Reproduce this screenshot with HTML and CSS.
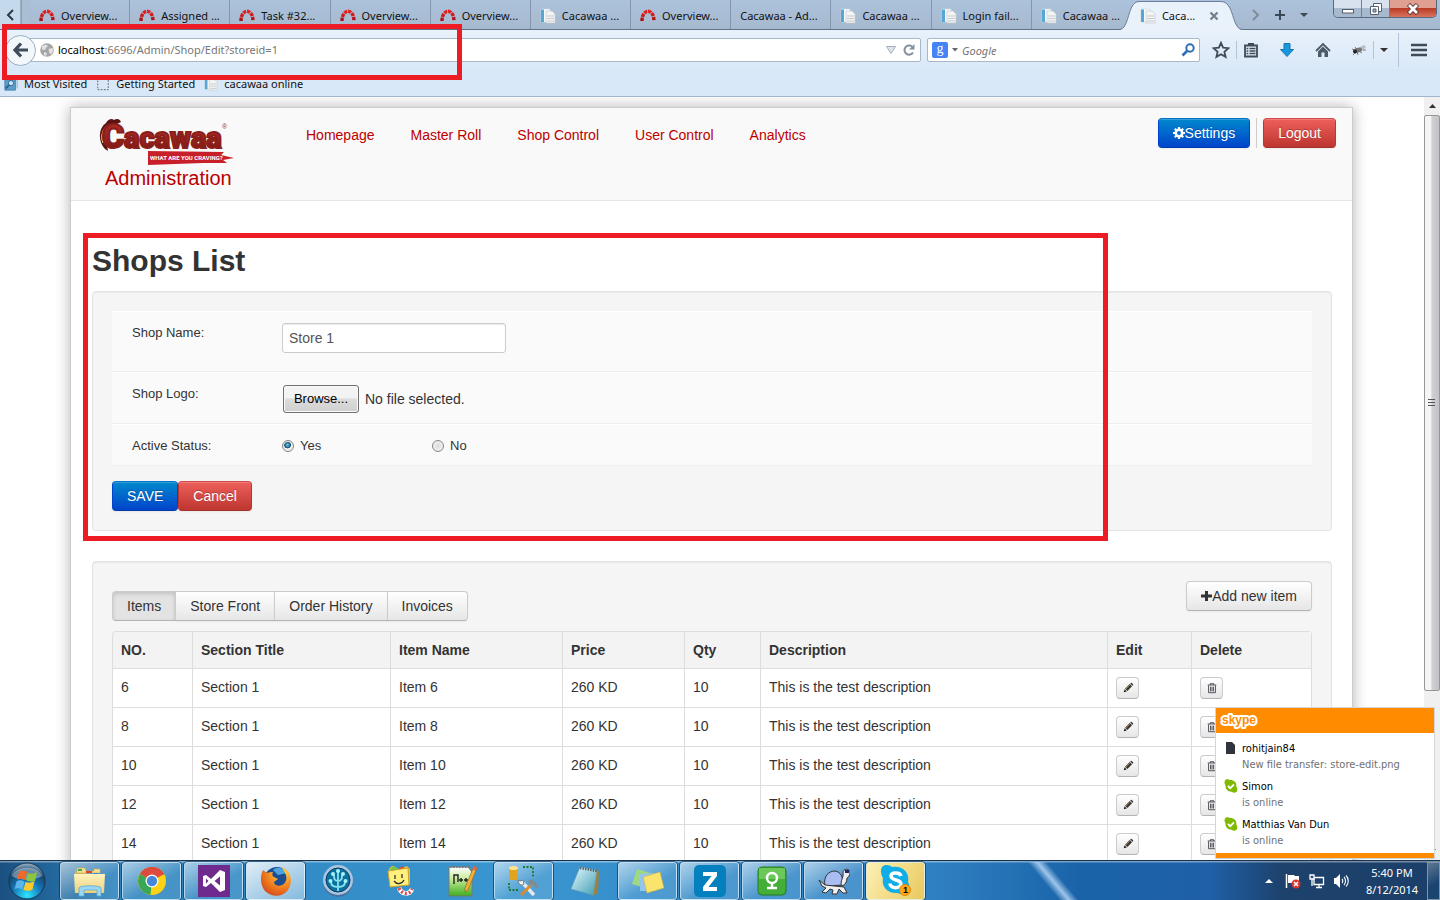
FILE: index.html
```html
<!DOCTYPE html>
<html lang="en">
<head>
<meta charset="utf-8">
<title>Cacawaa - Administration</title>
<link rel="stylesheet" href="styles.css">
</head>
<body>
<svg class="defs" aria-hidden="true">
  <defs>
    <linearGradient id="gWord" x1="0" y1="0" x2="0" y2="1"><stop offset="0" stop-color="#b5302a"/><stop offset=".6" stop-color="#96201c"/><stop offset="1" stop-color="#6b0f0c"/></linearGradient>
    <linearGradient id="gArc" x1="0" y1="0" x2="0" y2="1"><stop offset="0" stop-color="#e8221f"/><stop offset="1" stop-color="#a80d10"/></linearGradient>
    <radialGradient id="gOrb" cx=".5" cy=".9" r=".9"><stop offset="0" stop-color="#2fe6ff"/><stop offset=".45" stop-color="#1576b5"/><stop offset=".75" stop-color="#16456f"/><stop offset="1" stop-color="#9db8c9"/></radialGradient>
    <radialGradient id="gFox" cx=".7" cy=".2" r=".9"><stop offset="0" stop-color="#ffd94a"/><stop offset=".5" stop-color="#f58a1f"/><stop offset="1" stop-color="#d3461a"/></radialGradient>
    <linearGradient id="gGreen" x1="0" y1="0" x2="0" y2="1"><stop offset="0" stop-color="#fff"/><stop offset=".4" stop-color="#c7ec9c"/><stop offset="1" stop-color="#3fae1d"/></linearGradient>
    <linearGradient id="gPad" x1="0" y1="0" x2="1" y2="1"><stop offset="0" stop-color="#e9fbff"/><stop offset="1" stop-color="#3f9db3"/></linearGradient>
    <linearGradient id="gFold" x1="0" y1="0" x2="0" y2="1"><stop offset="0" stop-color="#fff3bf"/><stop offset="1" stop-color="#ecd07a"/></linearGradient>
  </defs>
  <symbol id="arc" viewBox="0 0 16 16"><path d="M2 13C2 0 14 0 14 13" fill="none" stroke="url(#gArc)" stroke-width="3.4" stroke-dasharray="3.4 .8"/></symbol>
  <symbol id="doc" viewBox="0 0 16 16"><path d="M1 1h9v13H1z" fill="#f7fafc" stroke="#cfd6dc" stroke-width=".6"/><path d="M1 1.500h3v12.500H1z" fill="#55a7d6"/><path d="M6 3h6l3 3v9H6z" fill="#f4f4f4" stroke="#c3c8cc" stroke-width=".7"/><path d="M7 8h7M7 10.500h7M7 13h7" stroke="#c4c9cc"/></symbol>
  <symbol id="pencil" viewBox="0 0 14 14"><path d="M2 12l1-3.500 2.600 2.600z" fill="#222"/><path d="M3.600 7.800L9 2.400l2.700 2.700L6.300 10.500z" fill="#333"/><path d="M9.600 1.800l.8-.8c.6-.5 3.200 2 2.700 2.700l-.8.800z" fill="#333"/><path d="M4.600 8.200L9 3.800" stroke="#d9a64a" stroke-width=".8"/></symbol>
  <symbol id="trash" viewBox="0 0 14 14"><path d="M2 3.500h10M5 3.500v-1.500h4v1.500M3 4v8.500h8V4M5.300 5.500v5.500M7 5.500v5.500M8.700 5.500v5.500" fill="none" stroke="#3a3a44" stroke-width="1"/></symbol>
  <symbol id="online" viewBox="0 0 14 14"><path d="M1 1.500C2-.2 5 .2 6 1c4-.3 7 2.700 6.300 6.500C14 10 13.500 12 12 13.200c-1.500.9-3.300.4-4.300-.5C4 13 1 10 1.500 6.300.3 5 .2 3 1 1.500z" fill="#7fba00"/><path d="M4 7l2.200 2.200L10 5.300" fill="none" stroke="#fff" stroke-width="1.800"/></symbol>
</svg>

<header class="chrome">
  <div class="tabstrip">
    <button class="scroll-left" aria-label="Scroll tabs left"><svg width="10" height="12"><path d="M8 1L3 6l5 5" fill="none" stroke="#2c3947" stroke-width="2"/></svg></button>
    <div class="tabs">
      <button class="tab"><svg><use href="#arc"/></svg>Overview...</button>
      <button class="tab"><svg><use href="#arc"/></svg>Assigned ...</button>
      <button class="tab"><svg><use href="#arc"/></svg>Task #32...</button>
      <button class="tab"><svg><use href="#arc"/></svg>Overview...</button>
      <button class="tab"><svg><use href="#arc"/></svg>Overview...</button>
      <button class="tab"><svg><use href="#doc"/></svg>Cacawaa ...</button>
      <button class="tab"><svg><use href="#arc"/></svg>Overview...</button>
      <button class="tab">Cacawaa - Ad...</button>
      <button class="tab"><svg><use href="#doc"/></svg>Cacawaa ...</button>
      <button class="tab"><svg><use href="#doc"/></svg>Login fail...</button>
      <button class="tab last"><svg><use href="#doc"/></svg>Cacawaa ...</button>
      <button class="tab active"><svg class="tab-shape" viewBox="0 0 124 30" preserveAspectRatio="none"><path d="M0 30C11 30 8 2 20 2H102C116 2 112 30 124 30z" fill="#e9f1fa"/><path d="M0 29.500C11 29.500 8 1.500 20 1.500H102C116 1.500 112 29.500 124 29.500" fill="none" stroke="#6d8298"/></svg><svg><use href="#doc"/></svg><span>Caca...</span><svg class="tab-close" viewBox="0 0 10 10"><path d="M1.500 1.500l7 7M8.500 1.500l-7 7" stroke="#76828f" stroke-width="2.400"/></svg></button>
    </div>
    <div class="tab-tools">
      <svg width="8" height="12"><path d="M1 1l5 5-5 5" fill="none" stroke="#7f8c9a" stroke-width="2"/></svg>
      <svg width="12" height="12"><path d="M6 1v10M1 6h10" stroke="#3b4856" stroke-width="2"/></svg>
      <svg width="8" height="6"><path d="M0 1h8L4 5z" fill="#3b4856"/></svg>
    </div>
    <div class="window-buttons">
      <button aria-label="Minimize"><svg width="14" height="12"><rect x="1.500" y="6.500" width="11" height="3.500" fill="#fff" stroke="#56606c"/></svg></button>
      <button aria-label="Restore"><svg width="14" height="14"><path d="M4.500 1.500h8v8h-8z" fill="#fff" stroke="#56606c"/><path d="M1.500 4.500h8v8h-8z" fill="#fff" stroke="#56606c"/><path d="M4 7h3v3H4z" fill="#9fb3c9" stroke="#56606c"/></svg></button>
      <button class="close" aria-label="Close"><svg width="14" height="12"><path d="M2.500 1.500l9 9M11.500 1.500l-9 9" stroke="#5a3232" stroke-width="4.500"/><path d="M3 2l8 8M11 2l-8 8" stroke="#fff" stroke-width="2.800"/></svg></button>
    </div>
  </div>

  <div class="toolbar">
    <button class="back" aria-label="Back"><svg width="16" height="16"><path d="M8 1.500L2 8l6 6.500M2.500 8H15" fill="none" stroke="#3f4c59" stroke-width="3.200"/></svg></button>
    <div class="urlbar">
      <svg width="14" height="14"><circle cx="7" cy="7" r="6.800" fill="#a5a5a5"/><path d="M2 3l4-1.500 2 1.500-2 2-1 2-3-.5zM8.500 6l4-1 .8 2.500-2 4-2-1.500zM4 9l3 1-1 3-2-1z" fill="#e2e2e2"/></svg>
      <span class="url"><b>localhost</b>:6696/Admin/Shop/Edit?storeid=1</span>
      <svg width="10" height="8"><path d="M.5.500h9l-4.500 7z" fill="#dfe5eb" stroke="#a3aeba"/></svg>
      <svg width="14" height="14"><path d="M11 9.500A4.600 4.600 0 1 1 10 3.500" fill="none" stroke="#8491a0" stroke-width="2"/><path d="M12.500 1v5.500H7z" fill="#8491a0"/></svg>
    </div>
    <div class="searchbar">
      <span class="g-badge">g</span>
      <svg width="6" height="4"><path d="M0 0h6L3 3.500z" fill="#666"/></svg>
      <input type="text" placeholder="Google" aria-label="Search">
      <svg width="14" height="14"><circle cx="9" cy="5" r="3.700" fill="none" stroke="#2d6fb3" stroke-width="2"/><path d="M6.500 7.500L1.500 12.500" stroke="#2d6fb3" stroke-width="2.600"/></svg>
    </div>
    <div class="tools">
      <svg width="18" height="18"><path d="M9 1.800l2.100 4.900 5.300.5-4 3.500 1.200 5.200L9 13.200l-4.600 2.700 1.200-5.200-4-3.500 5.300-.5z" fill="none" stroke="#3f4b57" stroke-width="1.800"/></svg>
      <i></i>
      <div class="tool-icons">
      <svg width="16" height="16"><path d="M2 3.500h12v11H2z" fill="none" stroke="#3f4b57" stroke-width="1.800"/><path d="M5 1h6v3H5z" fill="#3f4b57"/><path d="M3.500 6.500h1.800M6.500 6.500h6M3.500 9h1.800M6.500 9h6M3.500 11.500h1.800M6.500 11.500h6" stroke="#3f4b57" stroke-width="1.400"/></svg>
      <svg width="16" height="16"><path d="M5 1.500h6v6h3.500L8 14.500 1.500 7.500H5z" fill="#1a96dd" stroke="#1475b5"/></svg>
      <svg width="16" height="16"><path d="M1 9l7-7 7 7" fill="none" stroke="#4c5966" stroke-width="1.800"/><path d="M3 9.500l5-5 5 5V15H9.500v-4.500h-3V15H3z" fill="#4c5966"/></svg>
      <svg width="16" height="16"><path d="M6 7l7-4 2 2-5 5z" fill="#b9bcc0"/><ellipse cx="6.500" cy="8.500" rx="4.500" ry="2.400" transform="rotate(-18 6 8)" fill="#777"/><circle cx="4" cy="9.500" r="2" fill="#222"/><path d="M1 7l3 1M2 13l2-2M7 13l-1-3M11 11l-3-2M4 5l2 3M12 8h3" stroke="#666" stroke-width=".8"/></svg>
      </div>
      <i></i>
      <svg class="drop" width="8" height="6"><path d="M0 1h8L4 5z" fill="#333"/></svg>
      <i class="tall"></i>
      <svg class="menu" width="16" height="14"><path d="M0 2h16M0 7h16M0 12h16" stroke="#3f4b57" stroke-width="2.600"/></svg>
    </div>
  </div>

  <div class="bookmarks">
    <a href="#"><svg viewBox="0 0 16 16"><path d="M1 3h12v12H1z" fill="#5f9dc6" stroke="#3e7dab"/><path d="M4 1h11v12" fill="none" stroke="#79aacb"/><circle cx="8" cy="7" r="3" fill="#cbe6f7" stroke="#24608c"/><path d="M6 9l-4 4" stroke="#24608c" stroke-width="2"/></svg>Most Visited</a>
    <a href="#"><svg viewBox="0 0 16 16"><path d="M2 1.500h12v13H2z" fill="none" stroke="#555" stroke-dasharray="2 1.500"/></svg>Getting Started</a>
    <a href="#"><svg viewBox="0 0 16 16"><use href="#doc"/></svg>cacawaa online</a>
  </div>
  <div class="marker marker-url"></div>
</header>

<div class="viewport">
  <div class="page">
    <div class="wrapper">
      <div class="masthead">
        <div class="brand">
          <svg class="logo" width="136" height="50" role="img" aria-label="Cacawaa, what are you craving?">
            <path d="M7 31C0 24 0 10 8 5c2-4 6-5 8-3 3-2 6-1 7 2l-8 4C9 12 8 22 10 33z" fill="#5a1512"/>
            <path d="M5 25C2 18 5 10 10 7" fill="none" stroke="#fff" stroke-width="1"/>
            <text x="4" y="30" class="logo-cap">C</text>
            <text x="26" y="30" class="logo-word">acawaa</text>
            <text x="124" y="11" class="logo-reg">®</text>
            <path d="M50 33l76 1-3 3 13 3-11 2 4 3-24 0-55 2z" fill="#c8202a"/>
            <text x="52" y="42" class="logo-tag">WHAT ARE YOU CRAVING?</text>
          </svg>
          <span>Administration</span>
        </div>
        <nav>
          <a href="#">Homepage</a><a href="#">Master Roll</a><a href="#">Shop Control</a><a href="#">User Control</a><a href="#">Analytics</a>
        </nav>
        <div class="account">
          <button class="btn primary"><svg width="12" height="12" viewBox="0 0 12 12"><circle cx="6" cy="6" r="3.200" fill="none" stroke="#fff" stroke-width="2.600"/><path d="M6 0v2.500M6 9.500V12M0 6h2.500M9.500 6H12M1.800 1.800l1.700 1.700M8.500 8.500l1.700 1.700M10.200 1.800L8.500 3.500M3.500 8.500l-1.700 1.700" stroke="#fff" stroke-width="2.200"/></svg>Settings</button>
          <i></i>
          <button class="btn danger">Logout</button>
        </div>
      </div>

      <main>
        <h1>Shops List</h1>
        <form class="well">
          <div class="field name-row"><label for="name">Shop Name:</label><input id="name" type="text" value="Store 1"></div>
          <div class="field logo-row"><label for="logo">Shop Logo:</label><div class="file"><input id="logo" type="file"><button type="button">Browse...</button><span>No file selected.</span></div></div>
          <div class="field status-row"><span class="label">Active Status:</span><label class="radio"><input type="radio" name="active" checked>Yes</label><label class="radio"><input type="radio" name="active">No</label></div>
          <div class="actions"><button type="button" class="btn primary">SAVE</button><button type="button" class="btn danger">Cancel</button></div>
        </form>

        <section class="well items">
          <div class="items-bar">
            <div class="group"><button class="btn on">Items</button><button class="btn">Store Front</button><button class="btn">Order History</button><button class="btn">Invoices</button></div>
            <button class="btn"><svg width="11" height="12" viewBox="0 0 11 12"><path d="M5.500 1v10M0 6h11" stroke="#333" stroke-width="3"/></svg>Add new item</button>
          </div>
          <table>
            <colgroup><col class="c-no"><col class="c-section"><col class="c-item"><col class="c-price"><col class="c-qty"><col><col class="c-edit"><col class="c-delete"></colgroup>
            <thead><tr><th>NO.</th><th>Section Title</th><th>Item Name</th><th>Price</th><th>Qty</th><th>Description</th><th>Edit</th><th>Delete</th></tr></thead>
            <tbody>
              <tr><td>6</td><td>Section 1</td><td>Item 6</td><td>260 KD</td><td>10</td><td>This is the test description</td><td><button class="mini" aria-label="Edit"><svg><use href="#pencil"/></svg></button></td><td><button class="mini" aria-label="Delete"><svg><use href="#trash"/></svg></button></td></tr>
              <tr><td>8</td><td>Section 1</td><td>Item 8</td><td>260 KD</td><td>10</td><td>This is the test description</td><td><button class="mini" aria-label="Edit"><svg><use href="#pencil"/></svg></button></td><td><button class="mini" aria-label="Delete"><svg><use href="#trash"/></svg></button></td></tr>
              <tr><td>10</td><td>Section 1</td><td>Item 10</td><td>260 KD</td><td>10</td><td>This is the test description</td><td><button class="mini" aria-label="Edit"><svg><use href="#pencil"/></svg></button></td><td><button class="mini" aria-label="Delete"><svg><use href="#trash"/></svg></button></td></tr>
              <tr><td>12</td><td>Section 1</td><td>Item 12</td><td>260 KD</td><td>10</td><td>This is the test description</td><td><button class="mini" aria-label="Edit"><svg><use href="#pencil"/></svg></button></td><td><button class="mini" aria-label="Delete"><svg><use href="#trash"/></svg></button></td></tr>
              <tr><td>14</td><td>Section 1</td><td>Item 14</td><td>260 KD</td><td>10</td><td>This is the test description</td><td><button class="mini" aria-label="Edit"><svg><use href="#pencil"/></svg></button></td><td><button class="mini" aria-label="Delete"><svg><use href="#trash"/></svg></button></td></tr>
            </tbody>
          </table>
        </section>
      </main>
    </div>
  </div>
  <div class="scrollbar">
    <svg width="16" height="18"><path d="M5 11h7L8.500 7z" fill="#333"/></svg>
    <div class="thumb"><svg width="8" height="10"><path d="M0 1.500h7M0 4.500h7M0 7.500h7" stroke="#555"/></svg></div>
    <svg width="16" height="18"><path d="M5 7h7l-3.500 4z" fill="#333"/></svg>
  </div>
  <div class="marker marker-form"></div>

  <aside class="toast">
    <div class="toast-head"><svg width="44" height="18" role="img" aria-label="skype"><text x="3" y="12" class="skype-word">skype</text></svg></div>
    <ul>
      <li><svg viewBox="0 0 14 14"><path d="M2 1h6l3 3v9H2z" fill="#32343d"/></svg><div><strong>rohitjain84</strong><span>New file transfer: store-edit.png</span></div></li>
      <li><svg><use href="#online"/></svg><div><strong>Simon</strong><span>is online</span></div></li>
      <li><svg><use href="#online"/></svg><div><strong>Matthias Van Dun</strong><span>is online</span></div></li>
    </ul>
  </aside>
</div>

<footer class="taskbar">
  <button class="start" aria-label="Start"><svg width="38" height="38" viewBox="0 0 38 38"><circle cx="19" cy="19" r="18" fill="url(#gOrb)" stroke="#14334f"/><path d="M4 14C8 3 30 3 34 14c-8 5-22 5-30 0z" fill="#fff" opacity=".35"/><path d="M11 10c3-2 5-1 8 0l-2 8c-3-1-5-2-8 0z" fill="#f06a26"/><path d="M20 11c3 1 6 1 9-1l-2 9c-3 1-6 1-9-1z" fill="#8cc63f"/><path d="M8.500 19.500c3-2 5-1 8 0l-2 8c-3-1-5-2-8 0z" fill="#5bb5ea"/><path d="M17.500 20c3 1 6 1 9-1l-2 8.500c-3 2-6 1-9 .5z" fill="#fdc92e"/></svg></button>
  <div class="apps">
    <button class="app open" aria-label="Explorer"><svg viewBox="0 0 32 32"><path d="M1 6h10l2 3h17v19H1z" fill="#d9b65a"/><path d="M3 3h8l1 3h8V4h6v4H3z" fill="#f5df92" stroke="#c9a64b" stroke-width=".5"/><path d="M4 4h4v2H4z" fill="#3eaa41"/><path d="M12 6h6v2h-6z" fill="#d9472b"/><path d="M20 8h4v1.500h-4z" fill="#2f86d1"/><path d="M0 9h31l-1 19H1z" fill="url(#gFold)"/><path d="M5 31V23c0-3 22-3 22 0v8h-4v-6H10v6z" fill="#9bd6f2" stroke="#5cacd6" stroke-width=".8"/></svg></button>
    <button class="app open" aria-label="Chrome"><svg viewBox="0 0 32 32"><circle cx="16" cy="16" r="14" fill="#fcd116"/><path d="M16 16L3.900 9A14 14 0 0 1 28.100 9z" fill="#dd4b3e"/><path d="M16 16L3.900 9a14 14 0 0 0 10.500 20.900z" fill="#3aa757"/><path d="M3.900 9A14 14 0 0 1 28.500 9.500H16z" fill="#dd4b3e"/><circle cx="16" cy="16" r="6.500" fill="#fff"/><circle cx="16" cy="16" r="5.200" fill="#4587d8"/></svg></button>
    <button class="app open" aria-label="Visual Studio"><svg viewBox="0 0 32 32"><path d="M0 0h32v32H0z" fill="#6f2a8d"/><path d="M5 11l3-1 5 4 9-9 5 2v18l-5 2-9-9-5 4-3-1V11zm3 2.500v5l2.500-2.500zM16.500 16l5.500 4.500v-9z" fill="#fff"/></svg></button>
    <button class="app open bright" aria-label="Firefox"><svg viewBox="0 0 32 32"><circle cx="17" cy="15" r="13" fill="#1d4d91"/><path d="M13 5c4-4 11-2 14 3l-9 2z" fill="#4da3df"/><path d="M3 5l4 3c2-1 4-1 6-1-1 2-1 4 1 5l4 2-4 3c0 3 5 5 8 3 4-2 6-7 3-12-1-2-2-4-4-6C32 6 33 17 28 25c-5 7-16 8-23 1C0 20 0 11 3 5z" fill="url(#gFox)"/></svg></button>
    <button class="app" aria-label="GitEye"><svg viewBox="0 0 32 32"><circle cx="16" cy="17" r="15" fill="#4c6fa0"/><circle cx="16" cy="15" r="15" fill="#a9c4dc"/><circle cx="16" cy="15" r="12" fill="#0d6f9e" stroke="#073f68"/><path d="M16 26V6M16 22c-5 0-7-2-7-5M16 22c5 0 7-2 7-5M16 16c-4 0-4-3-4-6M16 16c4 0 4-3 4-6" fill="none" stroke="#83e3ee" stroke-width="1.800"/><g fill="#a6f3f7"><circle cx="16" cy="6" r="2"/><circle cx="11" cy="9" r="2"/><circle cx="21" cy="9" r="2"/><circle cx="8.500" cy="16" r="2"/><circle cx="23.500" cy="16" r="2"/></g></svg></button>
    <button class="app" aria-label="Folder buddy"><svg viewBox="0 0 32 32"><path d="M5 4c3-5 6-3 9 0l9-3 3 3v15L7 22z" fill="#e3bd3c"/><path d="M6 5c3-5 6-4 8 0" fill="#66c754"/><path d="M15 2h5v4h-5z" fill="#e0453d"/><path d="M4 6l20-3 1 17-19 2z" fill="#ffef7d" stroke="#c9a032"/><path d="M11 10v4M18 9v4M10 16c3 4 8 3 10-1" fill="none" stroke="#333" stroke-width="1.300"/><path d="M15 23c3 7 11 7 13 1" fill="none" stroke="#fff" stroke-width="4.500"/><path d="M15 23c3 7 11 7 13 1" fill="none" stroke="#df4d4d" stroke-width="3.500" stroke-dasharray="2 2"/></svg></button>
    <button class="app" aria-label="Notepad++"><svg viewBox="0 0 32 32"><path d="M3 2h19l4 5v24H3z" fill="url(#gGreen)" stroke="#777"/><path d="M4 2h20" stroke="#777" stroke-width="2" stroke-dasharray="1.500 1.500"/><path d="M8 19v-9h4v7M13 15h4M15 13v4M18 15h4M20 13v4" fill="none" stroke="#222" stroke-width="1.400"/><path d="M28 1l3 2-9 22-3 2v-4z" fill="#f2b13e" stroke="#99641f" stroke-width=".7"/><path d="M28 1l3 2-1 3-4-2z" fill="#d86a53"/></svg></button>
    <button class="app open" aria-label="Database tools"><svg viewBox="0 0 32 32"><path d="M1 3v10c0 3 9 3 9 0V3z" fill="#e2a41e"/><ellipse cx="5.500" cy="3" rx="4.500" ry="2" fill="#ffe38a"/><path d="M15 2h10v10M1 18v7h10" fill="none" stroke="#1e7a2b" stroke-width="1.800" stroke-dasharray="2 1.500"/><path d="M13 16l13 14" stroke="#e1e8ee" stroke-width="3.500"/><path d="M10 15c0 5 4 6 6 4l-1-4-3 1z" fill="#edf2f5" stroke="#6c7883"/><path d="M24 19L13 30" stroke="#d58c32" stroke-width="3"/><path d="M20 16l5-2 6 8-3 1-3-4-3 2z" fill="#7e8b96"/></svg></button>
    <button class="app" aria-label="Notepad"><svg viewBox="0 0 32 32"><path d="M10 3l19 3-1 22-5 3z" fill="#9c8142"/><path d="M10 2l17 3-4 25L1 24z" fill="url(#gPad)" stroke="#6fa3b0" stroke-width=".6"/><path d="M10 3l17 3" stroke="#555" stroke-width="2.500" stroke-dasharray="1.300 1.300"/></svg></button>
    <button class="app open" aria-label="Sticky notes"><svg viewBox="0 0 32 32"><path d="M5 4l13 4-5 15L0 19z" fill="#9ed883"/><path d="M8 9l15-1 1 18H8z" fill="#93c6ee"/><path d="M11 12l17-5 4 16-17 5z" fill="#fbe46d" stroke="#cdb03e" stroke-width=".6"/></svg></button>
    <button class="app open" aria-label="Zoho"><svg viewBox="0 0 32 32"><rect width="32" height="32" rx="5" fill="#0480be"/><path d="M9 7h14v4l-8.500 11H23v4H9v-4l8.500-11H9z" fill="#fff"/></svg></button>
    <button class="app open" aria-label="Webcam"><svg viewBox="0 0 32 32"><rect x="2" y="2" width="28" height="28" rx="4" fill="#43ae38" stroke="#227a1c"/><path d="M3 3h26v11H3z" fill="#6cc75a"/><circle cx="16" cy="13" r="5" fill="none" stroke="#fff" stroke-width="2.500"/><path d="M16 18v4M11 23h10" stroke="#fff" stroke-width="2.500"/></svg></button>
    <button class="app open" aria-label="TortoiseGit"><svg viewBox="0 0 32 32"><path d="M7 21C5 11 11 6 17 6c6 1 8 6 8 14z" fill="#a9bdf2" stroke="#333"/><path d="M23 19c0-5 3-7 2-11 0-5 7-5 7 0 0 3-2 4-3 5 0 4-2 7-5 8zM7 20l-6-5 3 6 4 2-4 4 4 1 4-4 3 1-1 4h5l2-5 4 4h4l-3-6z" fill="#eee" stroke="#333"/><path d="M27 5h4v3h-4z" fill="#226"/></svg></button>
    <button class="app open alert" aria-label="Skype"><svg viewBox="0 0 32 32"><path d="M2 2c3-3 8-2 10 0C22 0 30 7 28 17c3 5 1 11-4 12-2 .5-5 0-6-1C8 29 1 22 3 13 1 10 0 5 2 2z" fill="#10aee8"/><path d="M21 11c-1-4-10-4-10 0 0 5 10 3 10 8 0 5-11 5-11-.5" fill="none" stroke="#fff" stroke-width="3.500"/><circle cx="25" cy="25" r="5.500" fill="#ffa51f" stroke="#e58600"/><text x="23" y="28" class="badge-num">1</text></svg></button>
  </div>
  <div class="tray">
    <svg class="up" width="8" height="6"><path d="M0 5h8L4 1z" fill="#fff"/></svg>
    <svg width="16" height="16"><path d="M1.500 1v14" stroke="#fff" stroke-width="1.500"/><path d="M3 2h6l1 1h4v7H3z" fill="#fff"/><circle cx="11" cy="11" r="4.500" fill="#d9332a"/><path d="M9 9l4 4M13 9l-4 4" stroke="#fff" stroke-width="1.500"/></svg>
    <svg width="16" height="16"><path d="M5 4.500h9.500v7H5zM7 14.500h6M10 12v2" fill="none" stroke="#fff" stroke-width="1.300"/><path d="M1 2h4v4H1zM3 6v7" fill="#29527d" stroke="#fff" stroke-width="1.300"/></svg>
    <svg width="16" height="16"><path d="M1 5h2l4-4v14l-4-4H1z" fill="#fff"/><path d="M9 6c1 1 1 3 0 4M11 4c2 2 2 6 0 8M13 2.500c3 3 3 8 0 11" fill="none" stroke="#fff" stroke-width="1.100"/></svg>
    <div class="clock"><span>5:40 PM</span><span>8/12/2014</span></div>
    <button class="peek" aria-label="Show desktop"></button>
  </div>
</footer>
</body>
</html>
```
FILE: styles.css
```css
* { box-sizing: border-box; }
body {
  margin: 0;
  height: 100vh;
  display: flex;
  flex-direction: column;
  overflow: hidden;
  font: 14px/20px "Liberation Sans", Arial, sans-serif;
  color: #333;
  background: #fff;
}
button, input { font: inherit; color: inherit; }
button { padding: 0; border: 0; background: none; }
svg { flex: none; display: block; }
a { color: inherit; text-decoration: none; }
.defs { position: absolute; width: 0; height: 0; }

/* Browser chrome */
.chrome {
  position: relative;
  flex: none;
  height: 97px;
  display: flex;
  flex-direction: column;
  background: linear-gradient(#e9f1fa 30px, #d9e8f8 70px);
  border-bottom: 1px solid #9fb6ce;
  font: 12px/16px "Noto Sans", sans-serif;
  color: #111;
}
.tabstrip {
  flex: none;
  height: 30px;
  display: flex;
  background: linear-gradient(#acc2dc, #a6b9ce);
  border-bottom: 1px solid #5f7388;
}
.scroll-left {
  flex: none;
  width: 30px;
  padding-left: 5px;
  background: linear-gradient(90deg, #c5d9ec 20px, #73849a 21px, #a9bdd3 22px);
}
.tabs { flex: 0 1 1200px; display: flex; min-width: 0; }
.tab {
  position: relative;
  flex: 1 1 0;
  min-width: 0;
  display: flex;
  align-items: center;
  gap: 6px;
  padding: 2px 0 0 9px;
  border-right: 1px solid #8296ac;
  white-space: nowrap;
  font-size: 11px;
}
.tab svg { width: 16px; height: 16px; }
.tab.last, .tab.active { border-right: 0; }
.tab.active > * { position: relative; }
.tab.active .tab-shape { position: absolute; left: -12px; top: 0; width: 124px; height: 30px; }
.tab.active .tab-close { width: 10px; height: 10px; margin-left: 8px; }
.tab-tools { flex: 1; display: flex; align-items: center; gap: 14px; padding-left: 22px; }
.window-buttons {
  flex: none;
  display: flex;
  height: 18px;
  margin-right: 3px;
  border: 1px solid #56697e;
  border-top: 0;
  border-radius: 0 0 5px 5px;
  overflow: hidden;
}
.window-buttons button {
  width: 28px;
  display: grid;
  place-items: center;
  background: linear-gradient(#d7e2ee 50%, #a7b9cd 50%);
  border-right: 1px solid #6e8196;
}
.window-buttons .close { width: 46px; border: 0; background: linear-gradient(#dfa092 45%, #bb3c27 50%, #d8735f); }

.toolbar { flex: none; height: 40px; display: flex; align-items: center; padding-left: 5px; }
.back {
  position: relative;
  z-index: 1;
  flex: none;
  width: 31px;
  height: 31px;
  display: grid;
  place-items: center;
  border: 1px solid #9aaec3;
  border-radius: 50%;
  background: #f2f7fc;
}
.urlbar, .searchbar {
  display: flex;
  align-items: center;
  height: 24px;
  background: #fff;
  border: 1px solid #a6b8ca;
  border-radius: 2px;
}
.urlbar { flex: 1; gap: 6px; margin: 0 6px 0 -8px; padding: 0 4px 0 11px; }
.url { flex: 1; color: #777; font-size: 11px; }
.url b { color: #000; font-weight: 400; }
.urlbar svg { margin-right: -2px; }
.urlbar svg + svg { margin: 0 0 0 2px; }
.searchbar { width: 273px; gap: 4px; padding: 0 4px; }
.searchbar input { flex: 1; min-width: 0; border: 0; padding: 0; background: none; outline: 0; font: italic 11px "Noto Sans", sans-serif; }
.searchbar input::placeholder { color: #777; opacity: 1; }
.g-badge { width: 16px; height: 16px; border-radius: 2px; background: #4484f4; color: #fff; text-align: center; font: 14px/13px "Liberation Serif", serif; }
.tools { flex: none; width: 240px; display: flex; align-items: center; gap: 6px; padding-left: 12px; }
.tool-icons { display: flex; gap: 20px; }
.tools i { width: 1px; height: 18px; background: #b3c4d6; }
.tools .tall { height: 34px; margin-left: 4px; }
.tools .menu { margin-left: 6px; }

.bookmarks { flex: 1; display: flex; align-items: center; gap: 8px; padding: 2px 0 0 3px; }
.bookmarks a { display: flex; align-items: center; gap: 5px; font-size: 11px; }
.bookmarks svg { width: 16px; height: 14px; }

/* Highlight rectangles drawn over the screen */
.marker { position: absolute; border: 5px solid #ed1c24; pointer-events: none; }
.marker-url { left: 2px; top: 24px; width: 460px; height: 56px; z-index: 2; }
.marker-form { left: 83px; top: 136px; width: 1025px; height: 308px; }

/* Page */
.viewport { position: relative; flex: 1; min-height: 0; display: flex; overflow: hidden; }
.page { flex: 1; padding: 10px 71px 0 70px; overflow: hidden; }
.wrapper { min-height: 900px; border: 1px solid #ccc; background: #fff; box-shadow: 0 0 14px rgba(0, 0, 0, .3); }
.masthead { display: flex; align-items: flex-start; height: 93px; padding: 10px 16px 0 27px; background: #f9f9f9; border-bottom: 1px solid #e5e5e5; color: #bb0000; }
.brand { width: 208px; font-size: 20px; }
.brand span { display: block; padding-left: 7px; }
.logo { overflow: visible; }
.masthead nav { flex: 1; display: flex; gap: 36px; padding-top: 7px; }
.account { display: flex; gap: 6px; }
.account i { width: 1px; background: #ccc; }
.logo-cap, .logo-word { fill: url(#gWord); stroke: #8a1e1a; stroke-width: 2px; font: 900 34px Roboto, sans-serif; }
.logo-word { font-size: 29px; }
.logo-reg { fill: #92413a; font: 7px "Liberation Sans", sans-serif; }
.logo-tag { fill: #fff; font: 700 6px Roboto, sans-serif; }

main { padding: 40px 20px 0 21px; }
h1 { margin: 0 0 10px; font-size: 30px; line-height: 40px; }
.well {
  margin-bottom: 30px;
  padding: 19px;
  border: 1px solid #e3e3e3;
  border-radius: 4px;
  background: #f5f5f5;
  box-shadow: inset 0 1px 1px rgba(0, 0, 0, .05);
}
.field { display: flex; align-items: flex-start; padding: 11px 20px 9px; background: #fafafa; border-top: 1px solid #fff; border-bottom: 1px solid #eee; font-size: 13px; }
.field > label:first-child, .field > .label { width: 150px; }
.name-row { padding-bottom: 18px; }
.name-row input { width: 224px; height: 30px; padding: 4px 6px; border: 1px solid #ccc; border-radius: 3px; font-size: 14px; color: #555; background: #fff; box-shadow: inset 0 1px 1px rgba(0, 0, 0, .08); }
.file { display: flex; align-items: center; gap: 6px; height: 30px; padding-left: 1px; font-size: 14px; }
.file input { position: absolute; width: 1px; height: 1px; opacity: 0; }
.file button { width: 76px; height: 28px; border: 1px solid #707070; border-radius: 3px; background: linear-gradient(#f3f3f3 45%, #dcdcdc 50%, #cfcfcf); box-shadow: inset 0 0 0 1px #fafafa; font-size: 13px; color: #000; }
.radio { display: flex; align-items: center; gap: 6px; width: 150px; }
.radio input { appearance: none; width: 12px; height: 12px; margin: 0; border: 1px solid #858585; border-radius: 50%; background: radial-gradient(#ddd, #f7f7f7); box-shadow: inset 0 0 0 1px #eee; }
.radio input:checked { background: radial-gradient(circle at 45% 40%, #6fd0f5, #12506f 38%, #eee 45%); }
.actions { display: flex; padding-top: 15px; }

.btn {
  display: flex;
  align-items: center;
  height: 30px;
  padding: 0 14px;
  border: 1px solid #ccc;
  border-bottom-color: #b3b3b3;
  border-radius: 4px;
  background: linear-gradient(#fff, #e6e6e6);
  box-shadow: inset 0 1px 0 rgba(255, 255, 255, .2), 0 1px 2px rgba(0, 0, 0, .05);
  white-space: nowrap;
}
.btn.primary { color: #fff; border-color: #0074cc #0044cc #003ba8; background: linear-gradient(#0088cc, #0044cc); text-shadow: 0 -1px 0 rgba(0, 0, 0, .25); }
.btn.danger { color: #fff; border-color: #d04a45 #bd362f #a52f29; background: linear-gradient(#ee5f5b, #bd362f); text-shadow: 0 -1px 0 rgba(0, 0, 0, .25); }
.items { min-height: 400px; }
.items-bar { display: flex; align-items: flex-start; justify-content: space-between; margin-bottom: 10px; }
.group { display: flex; padding-top: 10px; }
.group .btn { border-radius: 0; margin-left: -1px; }
.group .btn:first-child { margin-left: 0; border-radius: 4px 0 0 4px; }
.group .btn:last-child { border-radius: 0 4px 4px 0; }
.group .on { background: #e3e3e3; box-shadow: inset 0 2px 4px rgba(0, 0, 0, .15); }

table { width: 100%; table-layout: fixed; border-collapse: separate; border-spacing: 0; border: 1px solid #ddd; border-left: 0; border-radius: 4px; background: #fff; }
.c-no { width: 80px; }
.c-section { width: 198px; }
.c-item { width: 172px; }
.c-price { width: 122px; }
.c-qty { width: 76px; }
.c-edit { width: 84px; }
.c-delete { width: 120px; }
th, td { padding: 8px; border-left: 1px solid #ddd; text-align: left; vertical-align: top; }
th { height: 36px; background: #f3f3f3; }
th:first-child { border-top-left-radius: 4px; }
td { height: 39px; border-top: 1px solid #ddd; }
.mini { display: grid; place-items: center; width: 23px; height: 22px; border: 1px solid #ccc; border-bottom-color: #b3b3b3; border-radius: 4px; background: linear-gradient(#fff, #e6e6e6); }
.mini svg { width: 12px; height: 12px; }

.scrollbar { flex: none; width: 16px; display: flex; flex-direction: column; background: #f0f0f0; }
.thumb { flex: 0 1 576px; display: grid; place-items: center; border: 1px solid #979797; border-radius: 2px; background: linear-gradient(90deg, #f5f5f5 40%, #d0d0d3 50%, #c3c3c7); }
.scrollbar > svg:last-child { margin-top: auto; }

/* Skype notification */
.toast { position: absolute; right: 5px; bottom: 1px; width: 220px; height: 152px; border: 1px solid #d5d5d5; border-bottom-color: #c9d3dc; background: #fff; font: 11px/16px "DejaVu Sans Condensed", "Noto Sans", sans-serif; }
.toast::after { content: ""; position: absolute; left: 0; right: 0; bottom: 0; height: 5px; background: #ff8c00; }
.toast-head { height: 25px; padding: 4px 3px; background: #ff8c00; }
.skype-word { fill: #ff8c00; stroke: #fff; stroke-width: 4px; paint-order: stroke; stroke-linejoin: round; font: 700 12px "Liberation Sans", sans-serif; }
.toast ul { list-style: none; margin: 0; padding: 8px 8px 0; display: flex; flex-direction: column; gap: 6px; }
.toast li { display: flex; gap: 4px; }
.toast li svg { width: 14px; height: 14px; }
.toast strong, .toast li span { display: block; font-weight: 400; white-space: nowrap; }
.toast strong { color: #000; }
.toast li span { color: #707070; }

/* Taskbar */
.taskbar {
  flex: none;
  height: 40px;
  display: flex;
  align-items: center;
  border-top: 1px solid #16324c;
  background:
    linear-gradient(rgba(255, 255, 255, .4) 1px, transparent 2px),
    linear-gradient(90deg, #1a5080, #2b82bd 8%, #3a96d0 35%, #2f80c2 65%, #1a63a8 75%, #1f60a8 84%, #1d426c 89%, #1b3f68);
  color: #fff;
  font: 11px/17px "Noto Sans", sans-serif;
}
.start { width: 60px; padding-left: 8px; }
.apps { flex: 1; display: flex; gap: 3px; }
.app { width: 59px; height: 38px; display: grid; place-items: center; }
.app svg { width: 32px; height: 32px; }
.app.open { border: 1px solid rgba(225, 242, 255, .7); border-radius: 3px; outline: 1px solid rgba(10, 40, 70, .6); outline-offset: 0; background: linear-gradient(150deg, rgba(255, 255, 255, .6), rgba(255, 255, 255, .12) 60%); }
.app.bright { background: linear-gradient(150deg, rgba(255, 255, 255, .85), rgba(255, 255, 255, .4)); }
.app.alert { background: linear-gradient(120deg, #fdf0b5, #e9c95d); }
.badge-num { fill: #000; font: 700 9px "Liberation Sans", sans-serif; }
.apps::after { content: ""; width: 90px; height: 38px; margin-left: 80px; background: linear-gradient(50deg, transparent 42%, rgba(190, 220, 250, .8) 50%, transparent 58%); }
.tray { flex: none; height: 100%; display: flex; align-items: center; gap: 8px; }
.tray .up { margin-right: 4px; }
.clock { display: flex; flex-direction: column; align-items: center; width: 70px; }
.peek { width: 13px; height: 38px; margin-left: -8px; border: 1px solid #7c94ad; background: linear-gradient(150deg, #5d7893, #1c4470 60%); }
```
